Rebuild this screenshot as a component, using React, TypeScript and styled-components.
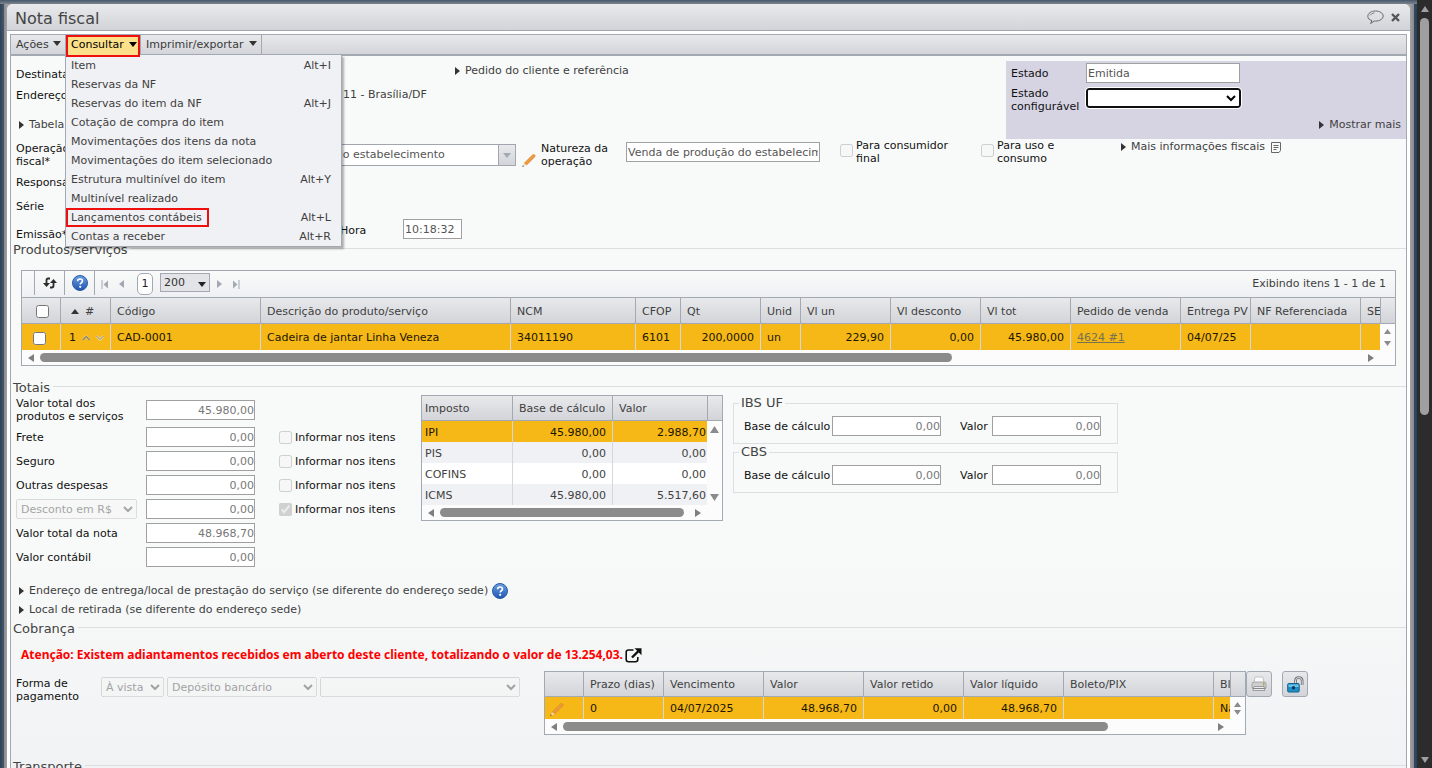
import React from "react";
import styled, { createGlobalStyle, css } from "styled-components";

const GlobalStyle = createGlobalStyle`
  *, *::before, *::after { box-sizing: border-box; }
  body {
    margin: 0;
    overflow: hidden;
    background: #55565b;
    font: 11px/16px "DejaVu Sans", Verdana, sans-serif;
    color: #3f3f3f;
  }
  button, input, select { font: inherit; margin: 0; }
  table { border-collapse: collapse; }
`;

const line = "#a2a9b3";
const headFill = "linear-gradient(#e8e9eb, #d2d4d9)";

/* ---------- window chrome ---------- */

const Shell = styled.div`
  display: flex;
  height: 100vh;
`;

const Backdrop = styled.div`
  flex: 1;
  min-width: 0;
  display: flex;
  padding: 4px 7px 0;
  background:
    linear-gradient(#46586c, #7d848d) top / 100% 4px no-repeat,
    linear-gradient(90deg, #2f4256, #44586e 4px, #88898d 4px, #a2a1a4 7px, #a2a1a4 calc(100% - 7px), #88898d calc(100% - 3px), #2f4a66 calc(100% - 3px), #2c4055);
`;

const Dialog = styled.main`
  flex: 1;
  min-width: 0;
  display: flex;
  flex-direction: column;
  background: #fff;
  border-radius: 6px 6px 0 0;
  overflow: hidden;
`;

const TitleBar = styled.header`
  display: flex;
  align-items: center;
  gap: 7px;
  height: 27px;
  flex: none;
  padding: 0 10px 0 8px;
  background: linear-gradient(#e9eaec, #d1d3d8);
  border-bottom: 1px solid ${line};
`;

const Title = styled.h1`
  flex: 1;
  margin: 0;
  padding-top: 4px;
  font-size: 16px;
  line-height: 20px;
  font-weight: 400;
  color: #444;
`;

const IconButton = styled.button`
  display: flex;
  padding: 0;
  border: 0;
  background: none;
`;

const Frame = styled.div`
  flex: 1;
  min-height: 0;
  margin: 3px 3px 0;
  border: 1px solid ${line};
  border-bottom: 0;
  overflow: hidden;
  background: linear-gradient(#f8faf9, #f8faf9 70%, #f1f2f4);
`;

const Rail = styled.div`
  width: 15px;
  display: flex;
  flex-direction: column;
  align-items: center;
  justify-content: space-between;
  padding: 6px 0 5px;
  background: #2c2c2c;
`;

const RailTop = styled.div`
  display: flex;
  flex-direction: column;
  align-items: center;
  gap: 6px;
  height: 54%;
`;

const RailThumb = styled.div`
  flex: 1;
  width: 9px;
  border-radius: 5px;
  background: #9f9f9f;
`;

/* ---------- menu bar ---------- */

const MenuBar = styled.nav`
  display: flex;
  height: 21px;
  background: linear-gradient(#e7e8ea, #d3d5da);
  border-bottom: 2px solid ${line};
`;

const MenuSlot = styled.div<{ $w: number }>`
  position: relative;
  width: ${(p) => p.$w}px;
  border-right: 1px solid ${line};
`;

const MenuButton = styled.button<{ $open?: boolean }>`
  width: 100%;
  height: 19px;
  display: flex;
  align-items: center;
  justify-content: space-between;
  padding: 0 4px 0 5px;
  border: 0;
  color: #3a3a3a;
  background: none;
  white-space: nowrap;
  & svg { margin-bottom: 2px; }
  ${(p) =>
    p.$open &&
    css`
      color: #000;
      background: #fde08a;
      outline: 2px solid #f00f0f;
      outline-offset: -2px;
      position: relative;
      z-index: 3;
      height: 22px;
      padding: 0 3px 2px 5px;
    `}
`;

const Menu = styled.ul`
  position: absolute;
  z-index: 2;
  top: 20px;
  left: -1px;
  width: 277px;
  margin: 0;
  padding: 1px 0 0;
  list-style: none;
  background: #f0f1f4;
  border: 1px solid ${line};
  border-top: 0;
  box-shadow: 2px 2px 2px rgba(0, 0, 0, 0.3);
`;

const MenuItem = styled.li`
  display: flex;
  justify-content: space-between;
  align-items: center;
  height: 19px;
  padding: 0 10px 0 0;
`;

const MenuLabel = styled.span<{ $marked?: boolean }>`
  padding: 0 7px 0 5px;
  line-height: 19px;
  ${(p) => p.$marked && "outline: 2px solid #f00f0f; outline-offset: -2px;"}
`;

/* ---------- form parts ---------- */

const Row = styled.div<{ $h: number; $top?: number; $in?: number }>`
  display: flex;
  align-items: center;
  height: ${(p) => p.$h}px;
  margin-top: ${(p) => p.$top ?? 0}px;
  padding-left: ${(p) => p.$in ?? 5}px;
  white-space: nowrap;
`;

const Label = styled.label<{ $w?: number }>`
  ${(p) => p.$w && `width: ${p.$w}px;`}
  flex: none;
  line-height: 13px;
  color: #111;
`;

const Note = styled.span`
  color: #3f3f3f;
`;

const Field = styled.input<{ $w: number; $num?: boolean }>`
  width: ${(p) => p.$w}px;
  height: 20px;
  flex: none;
  padding: 0 ${(p) => (p.$num ? 0 : 1)}px;
  border: 1px solid #a0a0a0;
  border-radius: 0;
  background: #fff;
  color: ${(p) => (p.$num ? "#777" : "#555")};
  text-align: ${(p) => (p.$num ? "right" : "left")};
`;

const Check = styled.input.attrs({ type: "checkbox" })`
  width: 13px;
  height: 13px;
  flex: none;
`;

const CheckLabel = styled.label`
  display: flex;
  gap: 3px;
  line-height: 13px;
  color: #111;
`;

const Drop = styled.select<{ $w: number }>`
  width: ${(p) => p.$w}px;
  height: 20px;
  flex: none;
`;

const StateDrop = styled(Drop)`
  align-self: start;
  margin-top: 3px;
  border: 2px solid #101010;
  border-radius: 3px;
  background: #fff;
  outline: 1px solid #fff;
`;

const Expander = styled.button`
  display: flex;
  align-items: center;
  gap: 5px;
  padding: 0;
  border: 0;
  background: none;
  color: #3f3f3f;
  line-height: 16px;
`;

const TopArea = styled.div`
  display: flex;
  justify-content: space-between;
  height: 83px;
`;

const TopForm = styled.div`
  flex: 1;
`;

const Upper = styled.div`
  align-self: flex-start;
`;

const Lower = styled.div`
  align-self: flex-end;
`;

const StatePanel = styled.section`
  width: 400px;
  margin-top: 5px;
  padding: 2px 5px 0;
  background: #d6d4e3;
  display: grid;
  grid-template-columns: 75px 1fr;
  grid-template-rows: 20px 30px 1fr;
  row-gap: 2px;
  align-items: center;
`;

const PanelMore = styled.div`
  grid-column: 1 / -1;
  justify-self: end;
  align-self: start;
`;

const OperationRow = styled.div`
  display: grid;
  grid-template-columns: 206px 294px 25px 85px 214px 141px 140px 1fr;
  height: 32px;
  padding-left: 5px;
  align-items: center;
`;

const TopCell = styled.div<{ $top: number }>`
  align-self: start;
  padding-top: ${(p) => p.$top}px;
  display: flex;
  gap: 6px;
  align-items: center;
`;

const CheckCell = styled.div`
  align-self: start;
  & input { margin-top: 5px; }
`;

const PencilCell = styled.div`
  align-self: end;
  display: flex;
  padding: 0 0 4px 6px;
`;

const Combo = styled.div`
  display: flex;
  height: 22px;
  border: 1px solid #a0a5b0;
  background: #fff;
`;

const ComboInput = styled.input`
  flex: 1;
  min-width: 0;
  border: 0;
  padding: 0 3px;
  color: #555;
  background: none;
`;

const ComboButton = styled.button`
  width: 17px;
  display: grid;
  place-items: center;
  padding: 0;
  border: 0;
  border-left: 1px solid #a0a5b0;
  background: ${headFill};
`;

/* ---------- sections ---------- */

const SectionTitle = styled.h2<{ $top?: number }>`
  display: flex;
  gap: 3px;
  margin: ${(p) => p.$top ?? 0}px 0 0 2px;
  height: 16px;
  font-size: 13px;
  line-height: 18px;
  font-weight: 400;
  color: #444;
  &::after {
    content: "";
    flex: 1;
    height: 1px;
    margin-top: 7px;
    background: #dcdedf;
  }
`;

/* ---------- grids ---------- */

const GridBox = styled.div<{ $w?: number }>`
  ${(p) => (p.$w ? `width: ${p.$w}px; flex: none;` : "margin: 13px 10px 0 10px;")}
  border: 1px solid ${line};
  background: #fcfcfc;
`;

const GridBar = styled.div`
  display: flex;
  align-items: center;
  height: 27px;
  padding: 0 9px 0 12px;
  border-bottom: 1px solid ${line};
  background: linear-gradient(#f9faf9, #eff0f3);
`;

const BarCell = styled.div`
  align-self: flex-start;
  display: grid;
  place-items: center;
  width: 30px;
  height: 24px;
  border-left: 1px solid ${line};
`;

const Pager = styled.div`
  flex: 1;
  align-self: flex-start;
  display: flex;
  align-items: center;
  height: 26px;
  padding-left: 7px;
  background: linear-gradient(${line}, ${line}) left top / 1px 24px no-repeat;
`;

const Step = styled(IconButton)<{ $w: number }>`
  width: ${(p) => p.$w}px;
`;

const PageBox = styled.span`
  width: 16px;
  margin-right: 7px;
  text-align: center;
  line-height: 20px;
  border: 1px solid ${line};
  border-radius: 5px;
  background: #fff;
  color: #222;
`;

const SizeBox = styled.div`
  position: relative;
  width: 50px;
  height: 20px;
  margin-right: 7px;
  align-self: flex-start;
  margin-top: 2px;
`;

const SizeSelect = styled.select`
  appearance: none;
  width: 50px;
  height: 19px;
  padding: 0 3px;
  border: 1px solid ${line};
  border-radius: 0;
  background: #e3e4e8;
  color: #333;
`;

const SizeArrow = styled.span`
  position: absolute;
  right: 4px;
  top: 9px;
  display: flex;
  pointer-events: none;
`;

const GridView = styled.div`
  display: flex;
`;

const GridClip = styled.div`
  flex: 1;
  min-width: 0;
  overflow: hidden;
`;

const GridSide = styled.div<{ $head: number }>`
  width: 15px;
  flex: none;
  display: flex;
  flex-direction: column;
  &::before {
    content: "";
    height: ${(p) => p.$head}px;
    background: ${headFill};
    border-bottom: 1px solid ${line};
    border-left: 1px solid ${line};
  }
`;

const SideArrows = styled.div`
  flex: 1;
  display: flex;
  flex-direction: column;
  align-items: center;
  justify-content: space-between;
  padding: 5px 0 4px;
`;

const Table = styled.table<{ $w: number }>`
  width: ${(p) => p.$w}px;
  table-layout: fixed;
  border-collapse: separate;
  border-spacing: 0;
`;

const Th = styled.th<{ $w: number; $h: number; $pad?: number; $mid?: boolean }>`
  width: ${(p) => p.$w}px;
  height: ${(p) => p.$h}px;
  padding: 2px 0 0 ${(p) => p.$pad ?? 6}px;
  font-weight: 400;
  text-align: ${(p) => (p.$mid ? "center" : "left")};
  white-space: nowrap;
  overflow: hidden;
  background: ${headFill};
  border-bottom: 1px solid ${line};
  border-right: 1px solid ${line};
  &:last-child { border-right: 0; }
`;

const Td = styled.td<{ $h: number; $num?: boolean; $pad?: number; $mid?: boolean }>`
  height: ${(p) => p.$h}px;
  padding: 2px ${(p) => (p.$num ? 6 : 0)}px 0 ${(p) => p.$pad ?? 6}px;
  text-align: ${(p) => (p.$num ? "right" : p.$mid ? "center" : "left")};
  white-space: nowrap;
  overflow: hidden;
  border-right: 1px solid #d5d7dc;
  &:last-child { border-right: 0; }
`;

const LastNum = styled(Td)`
  padding-right: 2px;
`;

const Tr = styled.tr<{ $sel?: boolean; $alt?: boolean }>`
  background: ${(p) => (p.$sel ? "#f5b816" : p.$alt ? "#f0f1f4" : "#fff")};
  color: ${(p) => (p.$sel ? "#1c1500" : "#3f3f3f")};
`;

const Inline = styled.span`
  display: flex;
  align-items: center;
  gap: 6px;
`;

const OrderLink = styled.a`
  color: #7a7150;
`;

const HBar = styled.div`
  display: flex;
  align-items: center;
  gap: 6px;
  height: 15px;
  padding: 0 21px 0 6px;
`;

const HTrack = styled.div`
  flex: 1;
  height: 9px;
`;

const HThumb = styled.div<{ $pct: number }>`
  width: ${(p) => p.$pct}%;
  height: 9px;
  border-radius: 5px;
  background: #8b8b8b;
`;

/* ---------- totals ---------- */

const Totals = styled.div`
  display: flex;
  align-items: flex-start;
`;

const TotalsForm = styled.div`
  width: 410px;
  flex: none;
  display: grid;
  grid-template-columns: 130px 133px 1fr;
  grid-template-rows: 30px repeat(6, 24px);
  align-items: center;
  padding-left: 5px;
`;

const TaxGroups = styled.div`
  width: 385px;
  margin-left: 10px;
`;

const TaxGroup = styled.fieldset`
  height: 49px;
  margin: 0;
  padding: 5px 16px 0 10px;
  border: 1px solid #dcdedf;
  & > legend {
    margin-left: -5px;
    padding: 0 2px;
    font-size: 13px;
    line-height: 16px;
    color: #444;
  }
`;

const TaxLine = styled.div`
  display: flex;
  align-items: center;
`;

const Gap = styled.span`
  width: 19px;
`;

const Delivery = styled.div`
  padding: 12px 0 1px;
`;

const HelpLine = styled.div`
  display: flex;
  align-items: center;
  gap: 4px;
`;

/* ---------- billing ---------- */

const Warning = styled.p`
  display: flex;
  align-items: center;
  gap: 2px;
  margin: 10px 0 7px 10px;
  font-family: "Noto Sans", "DejaVu Sans", sans-serif;
  font-size: 12px;
  line-height: 18px;
  font-weight: 700;
  color: #f00;
`;

const Billing = styled.div`
  display: flex;
  align-items: flex-start;
  min-height: 87px;
`;

const Payment = styled.div`
  display: flex;
  gap: 3px;
  width: 533px;
  flex: none;
  padding: 6px 0 0 5px;
`;

const Tool = styled.button`
  width: 26px;
  height: 26px;
  margin-right: 10px;
  display: grid;
  place-items: center;
  padding: 0;
  border: 1px solid ${line};
  border-radius: 3px;
  background: ${headFill};
`;

/* ---------- drawings ---------- */

const Tri = ({ dir, w, h, fill = "#333" }: { dir: "up" | "down" | "left" | "right"; w: number; h: number; fill?: string }) => {
  const pts = {
    up: `0,${h} ${w},${h} ${w / 2},0`,
    down: `0,0 ${w},0 ${w / 2},${h}`,
    left: `${w},0 ${w},${h} 0,${h / 2}`,
    right: `0,0 0,${h} ${w},${h / 2}`,
  }[dir];
  return (
    <svg width={w} height={h} viewBox={`0 0 ${w} ${h}`} aria-hidden>
      <polygon points={pts} fill={fill} />
    </svg>
  );
};

const Help = () => (
  <svg width="16" height="16" viewBox="0 0 16 16" aria-hidden>
    <defs>
      <linearGradient id="helpFill" x1="0" y1="0" x2="0" y2="1">
        <stop offset="0" stopColor="#6a9fe2" />
        <stop offset="1" stopColor="#1f56b0" />
      </linearGradient>
    </defs>
    <circle cx="8" cy="8" r="7.5" fill="url(#helpFill)" stroke="#2b5ba6" />
    <path d="M5.6 6.3C5.6 4.7 6.6 4 8 4s2.5.8 2.5 2.1c0 1.6-2.3 1.7-2.3 3.4" fill="none" stroke="#fff" strokeWidth="1.6" />
    <circle cx="8.2" cy="11.8" r="1.1" fill="#fff" />
  </svg>
);

const Refresh = () => (
  <svg width="14" height="12" viewBox="0 0 14 12" fill="none" stroke="#2b2b2b" strokeWidth="1.8" aria-hidden>
    <path d="M7 1.5H5.2Q3.5 1.5 3.5 3.2V7" />
    <path d="M0 6h7l-3.5 4z" fill="#2b2b2b" stroke="none" />
    <path d="M7 10.5h1.8q1.7 0 1.7-1.7V5" />
    <path d="M7 6h7l-3.5-4z" fill="#2b2b2b" stroke="none" />
  </svg>
);

const Pencil = () => (
  <svg width="14" height="13" viewBox="0 0 14 13" aria-hidden>
    <path d="M2.2 9.2 10.6.9q1-.9 2 0t0 2L4.6 11z" fill="#ee9a3d" stroke="#d9812a" strokeWidth=".7" />
    <path d="M2.2 9.2 4.6 11 .8 12.6z" fill="#f3dcb8" />
    <path d="M.3 13l.5-1.7 1.2 1z" fill="#444" />
  </svg>
);

const Bubble = () => (
  <svg width="17" height="15" viewBox="0 0 17 15" fill="none" stroke="#6a6a6a" aria-hidden>
    <path d="M5 10.6C2.300 10 .8 8.400.8 6.300.8 3.300 4.200 1 8.500 1s7.700 2.200 7.700 5-3.400 5.100-7.700 5.100H7.300L3.500 13.500z" />
    <path d="M3 5.500Q4.200 3.200 7.500 2.900" strokeWidth=".8" />
  </svg>
);

const Close = () => (
  <svg width="9" height="9" viewBox="0 0 9 9" stroke="#555" strokeWidth="2.4" aria-hidden>
    <path d="M1 1l7 7M8 1L1 8" />
  </svg>
);

const NoteIcon = () => (
  <svg width="10" height="11" viewBox="0 0 10 11" fill="none" stroke="#666" aria-hidden>
    <path d="M.5.5h9v8l-1.500 2h-7.500z" />
    <path d="M2.500 3.500h5M2.500 5.500h5M2.500 7.500h3" />
  </svg>
);

const External = () => (
  <svg width="17" height="15" viewBox="0 0 17 15" fill="none" stroke="#111" aria-hidden>
    <path d="M8.500 2H3.500Q1.200 2 1.200 4.200V11.500Q1.200 13.700 3.500 13.700H10.500Q12.800 13.700 12.800 11.500V9" strokeWidth="1.6" />
    <path d="M7 9.500 14 2.500" strokeWidth="2.4" />
    <path d="M9.500.3h7v7z" fill="#111" stroke="none" />
  </svg>
);

const Chevrons = () => (
  <svg width="22" height="6" viewBox="0 0 22 6" fill="none" aria-hidden>
    <path d="M.8 5 4.300 1.500 7.800 5" stroke="#e0cfa6" strokeWidth="2.2" />
    <path d="M.8 5 4.300 1.500 7.800 5" stroke="#8f7f5c" strokeWidth="1.2" />
    <path d="M14.500 1 18 4.500 21.500 1" stroke="#ecdcb4" strokeWidth="2.4" />
    <path d="M14.500 1 18 4.500 21.500 1" stroke="#8f7f5c" strokeWidth="1" />
  </svg>
);

const Printer = () => (
  <svg width="16" height="16" viewBox="0 0 16 16" aria-hidden>
    <path d="M4 1h8l1 6H3z" fill="#fafafa" stroke="#b9b9b9" strokeWidth=".8" />
    <path d="M1 8q0-2 2-2h10q2 0 2 2v4H1z" fill="#cfcfcf" stroke="#999" strokeWidth=".8" />
    <path d="M3 10.500h10l1 4H2z" fill="#ececec" stroke="#8d8d8d" strokeWidth=".8" />
    <path d="M1.500 12.500h13" stroke="#888" />
    <circle cx="12.800" cy="7.600" r=".8" fill="#63b24b" />
    <circle cx="12.800" cy="9.300" r=".7" fill="#e08a2e" />
  </svg>
);

const Lock = () => (
  <svg width="17" height="17" viewBox="0 0 17 17" fill="none" aria-hidden>
    <path d="M8.500 8V4.500Q8.700 1.500 11.800 1.500T15.200 4.500V9" stroke="#6c6c6c" strokeWidth="2.6" />
    <path d="M8.500 8V4.500Q8.700 1.500 11.800 1.500T15.200 4.500V9" stroke="#e2e2e2" strokeWidth="1" />
    <rect x=".7" y="7.5" width="11.5" height="8.5" rx="1" fill="#1f8fc6" stroke="#14628c" />
    <path d="M1.500 8.500h10v2.500h-10z" fill="#6cc3e8" />
    <circle cx="6.500" cy="11.800" r="1.7" fill="#0d3550" />
  </svg>
);

const EdgeStep = ({ last }: { last?: boolean }) => (
  <svg width="7" height="9" viewBox="0 0 7 9" aria-hidden>
    {last ? <path d="M0 .5v8L4.500 4.500zM5.500 0h1v9h-1z" fill={line} /> : <path d="M7 .5v8L2.500 4.500zM.5 0h1v9h-1z" fill={line} />}
  </svg>
);

/* ---------- data ---------- */

type Column = { title: string; w: number; value: string; num?: boolean };

const menuItems: [string, string?, boolean?][] = [
  ["Item", "Alt+I"],
  ["Reservas da NF"],
  ["Reservas do item da NF", "Alt+J"],
  ["Cotação de compra do item"],
  ["Movimentações dos itens da nota"],
  ["Movimentações do item selecionado"],
  ["Estrutura multinível do item", "Alt+Y"],
  ["Multinível realizado"],
  ["Lançamentos contábeis", "Alt+L", true],
  ["Contas a receber", "Alt+R"],
];

const productCols: Column[] = [
  { title: "Código", w: 150, value: "CAD-0001" },
  { title: "Descrição do produto/serviço", w: 250, value: "Cadeira de jantar Linha Veneza" },
  { title: "NCM", w: 125, value: "34011190" },
  { title: "CFOP", w: 45, value: "6101" },
  { title: "Qt", w: 80, value: "200,0000", num: true },
  { title: "Unid", w: 40, value: "un" },
  { title: "Vl un", w: 90, value: "229,90", num: true },
  { title: "Vl desconto", w: 90, value: "0,00", num: true },
  { title: "Vl tot", w: 90, value: "45.980,00", num: true },
  { title: "Pedido de venda", w: 110, value: "4624 #1" },
  { title: "Entrega PV", w: 70, value: "04/07/25" },
  { title: "NF Referenciada", w: 110, value: "" },
  { title: "SEFAZ", w: 90, value: "" },
];

const taxes = [
  ["IPI", "45.980,00", "2.988,70"],
  ["PIS", "0,00", "0,00"],
  ["COFINS", "0,00", "0,00"],
  ["ICMS", "45.980,00", "5.517,60"],
];

const installmentCols: Column[] = [
  { title: "Prazo (dias)", w: 80, value: "0" },
  { title: "Vencimento", w: 100, value: "04/07/2025" },
  { title: "Valor", w: 100, value: "48.968,70", num: true },
  { title: "Valor retido", w: 100, value: "0,00", num: true },
  { title: "Valor líquido", w: 100, value: "48.968,70", num: true },
  { title: "Boleto/PIX", w: 150, value: "" },
  { title: "Bloqueado", w: 90, value: "Não" },
];

const totalRows: { id: string; title: React.ReactNode; value: string; check?: boolean; on?: boolean }[] = [
  { id: "vtp", title: <>Valor total dos<br />produtos e serviços</>, value: "45.980,00" },
  { id: "frete", title: "Frete", value: "0,00", check: true },
  { id: "seguro", title: "Seguro", value: "0,00", check: true },
  { id: "outras", title: "Outras despesas", value: "0,00", check: true },
  { id: "desconto", title: null, value: "0,00", check: true, on: true },
  { id: "vtn", title: "Valor total da nota", value: "48.968,70" },
  { id: "vc", title: "Valor contábil", value: "0,00" },
];

const ScrollRow = ({ pct }: { pct: number }) => (
  <HBar>
    <Tri dir="left" w={6} h={8} fill="#7f7f7f" />
    <HTrack>
      <HThumb $pct={pct} />
    </HTrack>
    <Tri dir="right" w={6} h={8} fill="#7f7f7f" />
  </HBar>
);

const Side = ({ head, size = 7 }: { head: number; size?: number }) => (
  <GridSide $head={head}>
    <SideArrows>
      <Tri dir="up" w={size} h={size - 2} fill="#8b8b8b" />
      <Tri dir="down" w={size} h={size - 2} fill="#8b8b8b" />
    </SideArrows>
  </GridSide>
);

const Disclosure = ({ children }: { children: React.ReactNode }) => (
  <Expander type="button">
    <Tri dir="right" w={5} h={8} />
    {children}
  </Expander>
);

const TaxFields = ({ name, id }: { name: string; id: string }) => (
  <TaxGroup>
    <legend>{name}</legend>
    <TaxLine>
      <Label $w={88} htmlFor={`${id}-base`}>Base de cálculo</Label>
      <Field $w={109} $num id={`${id}-base`} defaultValue="0,00" readOnly />
      <Gap />
      <Label $w={32} htmlFor={`${id}-valor`}>Valor</Label>
      <Field $w={109} $num id={`${id}-valor`} defaultValue="0,00" readOnly />
    </TaxLine>
  </TaxGroup>
);

export default function App() {
  return (
    <Shell>
      <GlobalStyle />
      <Backdrop>
        <Dialog>
          <TitleBar>
            <Title>Nota fiscal</Title>
            <IconButton aria-label="Comentários"><Bubble /></IconButton>
            <IconButton aria-label="Fechar"><Close /></IconButton>
          </TitleBar>
          <Frame>
            <MenuBar>
              <MenuSlot $w={55}>
                <MenuButton>Ações <Tri dir="down" w={8} h={5} /></MenuButton>
              </MenuSlot>
              <MenuSlot $w={75}>
                <MenuButton $open>Consultar <Tri dir="down" w={8} h={5} fill="#000" /></MenuButton>
                <Menu>
                  {menuItems.map(([name, key, marked]) => (
                    <MenuItem key={name}>
                      <MenuLabel $marked={marked}>{name}</MenuLabel>
                      {key && <span>{key}</span>}
                    </MenuItem>
                  ))}
                </Menu>
              </MenuSlot>
              <MenuSlot $w={121}>
                <MenuButton>Imprimir/exportar <Tri dir="down" w={8} h={5} /></MenuButton>
              </MenuSlot>
            </MenuBar>

            <TopArea>
              <TopForm>
                <Row $h={22} $top={7}>
                  <Label $w={439}>Destinatário</Label>
                  <Upper><Disclosure>Pedido do cliente e referência</Disclosure></Upper>
                </Row>
                <Row $h={20}>
                  <Label $w={327}>Endereço</Label>
                  <Note>11 - Brasília/DF</Note>
                </Row>
                <Row $h={20} $top={10} $in={8}>
                  <Disclosure>Tabela de preço</Disclosure>
                </Row>
              </TopForm>
              <StatePanel>
                <Label htmlFor="estado">Estado</Label>
                <Field $w={154} id="estado" defaultValue="Emitida" />
                <Label htmlFor="estado-conf">Estado<br />configurável</Label>
                <StateDrop $w={155} id="estado-conf"><option></option></StateDrop>
                <PanelMore><Disclosure>Mostrar mais</Disclosure></PanelMore>
              </StatePanel>
            </TopArea>

            <OperationRow>
              <Label htmlFor="operacao">Operação<br />fiscal*</Label>
              <Combo>
                <ComboInput id="operacao" defaultValue="Venda de produção do estabelecimento" />
                <ComboButton aria-label="Abrir lista"><Tri dir="down" w={8} h={5} fill={line} /></ComboButton>
              </Combo>
              <PencilCell><Pencil /></PencilCell>
              <Label htmlFor="natureza">Natureza da<br />operação</Label>
              <TopCell $top={3}><Field $w={194} id="natureza" defaultValue="Venda de produção do estabelecimento" /></TopCell>
              <CheckCell><CheckLabel><Check disabled /><span>Para consumidor<br />final</span></CheckLabel></CheckCell>
              <CheckCell><CheckLabel><Check disabled /><span>Para uso e<br />consumo</span></CheckLabel></CheckCell>
              <TopCell $top={0}><Disclosure>Mais informações fiscais</Disclosure><NoteIcon /></TopCell>
            </OperationRow>
            <Row $h={22}><Label>Responsável</Label></Row>
            <Row $h={26}><Label>Série</Label></Row>
            <Row $h={22}>
              <Lower><Label as="div" $w={324}>Emissão*</Label></Lower>
              <Label $w={63} htmlFor="hora">Hora</Label>
              <Upper><Field $w={59} id="hora" defaultValue="10:18:32" /></Upper>
            </Row>

            <SectionTitle>Produtos/serviços</SectionTitle>
            <GridBox>
              <GridBar>
                <BarCell><IconButton aria-label="Atualizar"><Refresh /></IconButton></BarCell>
                <BarCell><IconButton aria-label="Ajuda"><Help /></IconButton></BarCell>
                <Pager>
                  <Step $w={18} aria-label="Primeira"><EdgeStep /></Step>
                  <Step $w={18} aria-label="Anterior"><Tri dir="left" w={5} h={8} fill={line} /></Step>
                  <PageBox>1</PageBox>
                  <SizeBox>
                    <SizeSelect aria-label="Itens por página"><option>200</option></SizeSelect>
                    <SizeArrow><Tri dir="down" w={8} h={5} fill="#222" /></SizeArrow>
                  </SizeBox>
                  <Step $w={16} aria-label="Próxima"><Tri dir="right" w={5} h={8} fill={line} /></Step>
                  <Step $w={16} aria-label="Última"><EdgeStep last /></Step>
                </Pager>
                <span>Exibindo itens 1 - 1 de 1</span>
              </GridBar>
              <GridView>
                <GridClip>
                  <Table $w={1429}>
                    <thead>
                      <tr>
                        <Th $w={39} $h={26} $pad={14}><Inline><Check aria-label="Selecionar todos" /></Inline></Th>
                        <Th $w={50} $h={26} $pad={10}><Inline><Tri dir="up" w={8} h={5} />#</Inline></Th>
                        {productCols.map((c) => <Th key={c.title} $w={c.w} $h={26}>{c.title}</Th>)}
                      </tr>
                    </thead>
                    <tbody>
                      <Tr $sel>
                        <Td $h={26} $pad={11}><Inline><Check aria-label="Selecionar item 1" /></Inline></Td>
                        <Td $h={26} $pad={8}><Inline>1<Chevrons /></Inline></Td>
                        {productCols.map((c) => (
                          <Td key={c.title} $h={26} $num={c.num}>
                            {c.title === "Pedido de venda" ? <OrderLink href="#pedido">{c.value}</OrderLink> : c.value}
                          </Td>
                        ))}
                      </Tr>
                    </tbody>
                  </Table>
                </GridClip>
                <Side head={26} />
              </GridView>
              <ScrollRow pct={69} />
            </GridBox>

            <SectionTitle $top={13}>Totais</SectionTitle>
            <Totals>
              <TotalsForm>
                {totalRows.map((r) => (
                  <React.Fragment key={r.id}>
                    {r.title ? (
                      <Label htmlFor={r.id}>{r.title}</Label>
                    ) : (
                      <Drop $w={121} disabled aria-label="Tipo de desconto"><option>Desconto em R$</option></Drop>
                    )}
                    <Field $w={109} $num id={r.id} defaultValue={r.value} aria-label={r.title ? undefined : "Desconto"} />
                    {r.check ? <CheckLabel><Check disabled defaultChecked={r.on} />Informar nos itens</CheckLabel> : <span />}
                  </React.Fragment>
                ))}
              </TotalsForm>
              <GridBox $w={302}>
                <GridView>
                  <GridClip>
                    <Table $w={286}>
                      <thead>
                        <tr>
                          <Th $w={91} $h={25} $pad={3}>Imposto</Th>
                          <Th $w={100} $h={25}>Base de cálculo</Th>
                          <Th $w={95} $h={25}>Valor</Th>
                        </tr>
                      </thead>
                      <tbody>
                        {taxes.map(([name, base, value], i) => (
                          <Tr key={name} $sel={i === 0} $alt={i % 2 === 1}>
                            <Td $h={21} $pad={3}>{name}</Td>
                            <Td $h={21} $num>{base}</Td>
                            <LastNum $h={21} $num>{value}</LastNum>
                          </Tr>
                        ))}
                      </tbody>
                    </Table>
                  </GridClip>
                  <Side head={25} size={9} />
                </GridView>
                <ScrollRow pct={98} />
              </GridBox>
              <TaxGroups>
                <TaxFields name="IBS UF" id="ibs" />
                <TaxFields name="CBS" id="cbs" />
              </TaxGroups>
            </Totals>
            <Delivery>
              <Row $h={19} $in={8}>
                <HelpLine>
                  <Disclosure>Endereço de entrega/local de prestação do serviço (se diferente do endereço sede)</Disclosure>
                  <Help />
                </HelpLine>
              </Row>
              <Row $h={19} $in={8}><Disclosure>Local de retirada (se diferente do endereço sede)</Disclosure></Row>
            </Delivery>

            <SectionTitle>Cobrança</SectionTitle>
            <Warning>Atenção: Existem adiantamentos recebidos em aberto deste cliente, totalizando o valor de 13.254,03.<External /></Warning>
            <Billing>
              <Payment>
                <Label $w={82} htmlFor="forma">Forma de<br />pagamento</Label>
                <Drop $w={63} id="forma" disabled><option>À vista</option></Drop>
                <Drop $w={150} disabled aria-label="Meio de pagamento"><option>Depósito bancário</option></Drop>
                <Drop $w={200} disabled aria-label="Conta"><option></option></Drop>
              </Payment>
              <GridBox $w={702}>
                <GridView>
                  <GridClip>
                    <Table $w={759}>
                      <thead>
                        <tr>
                          <Th $w={39} $h={25} aria-label="Editar" />
                          {installmentCols.map((c) => <Th key={c.title} $w={c.w} $h={25}>{c.title}</Th>)}
                        </tr>
                      </thead>
                      <tbody>
                        <Tr $sel>
                          <Td $h={22} $pad={5}><Inline><Pencil /></Inline></Td>
                          {installmentCols.map((c) => <Td key={c.title} $h={22} $num={c.num}>{c.value}</Td>)}
                        </Tr>
                      </tbody>
                    </Table>
                  </GridClip>
                  <Side head={25} />
                </GridView>
                <ScrollRow pct={84} />
              </GridBox>
              <Tool aria-label="Imprimir"><Printer /></Tool>
              <Tool aria-label="Desbloquear"><Lock /></Tool>
            </Billing>
            <SectionTitle>Transporte</SectionTitle>
          </Frame>
        </Dialog>
      </Backdrop>
      <Rail>
        <RailTop>
          <Tri dir="up" w={8} h={6} fill="#9f9f9f" />
          <RailThumb />
        </RailTop>
        <Tri dir="down" w={8} h={6} fill="#9f9f9f" />
      </Rail>
    </Shell>
  );
}
